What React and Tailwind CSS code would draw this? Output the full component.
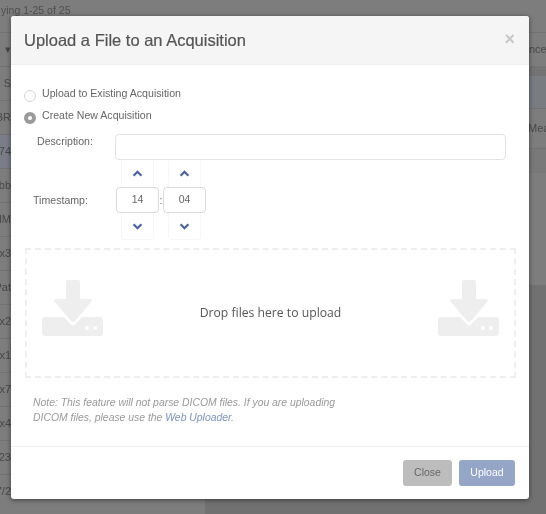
import React from "react";

const sans = "font-['Liberation_Sans',Arial,sans-serif]";

const leftRows = [
  { text: "▾" },
  { text: "S" },
  { text: "BR" },
  { text: "674", selected: true },
  { text: "obb" },
  { text: "MM" },
  { text: "xx3" },
  { text: "Pat" },
  { text: "xx2" },
  { text: "xx1" },
  { text: "xx7" },
  { text: "xx4" },
  { text: "23" },
  { text: "7/2" },
];

const Chevron = ({ up }) => (
  <svg viewBox="0 0 12 8" className="w-[11px] h-[7px]" fill="none">
    <path
      d={up ? "M1.5 6.5 L6 2 L10.5 6.5" : "M1.5 1.5 L6 6 L10.5 1.5"}
      stroke="#4a66a0"
      strokeWidth="2.6"
    />
  </svg>
);

const DownloadIcon = () => (
  <svg viewBox="0 0 61 56" className="w-[61px] h-[56px] -mt-[10px]">
    <path
      d="M24 2 Q24 0 26 0 H36 Q38 0 38 2 V19 H48 Q51 19 49 22 L33 41 Q31 43 29 41 L13 22 Q11 19 14 19 H24 Z"
      fill="#eeeeee"
    />
    <path
      d="M3 37 H22 L29 44.5 Q31 46.5 33 44.5 L40 37 H58 Q61 37 61 40 V53 Q61 56 58 56 H3 Q0 56 0 53 V40 Q0 37 3 37 Z"
      fill="#eeeeee"
    />
    <circle cx="45" cy="48" r="1.9" fill="#ffffff" />
    <circle cx="53" cy="48" r="1.9" fill="#ffffff" />
  </svg>
);

const TimeField = ({ value }) => (
  <div className="flex flex-col items-center w-[43px]">
    <div className="w-[33px] h-[27px] flex items-center justify-center border-x border-[#f7f7f7]">
      <Chevron up />
    </div>
    <div className="w-[43px] h-[26px] flex items-center justify-center rounded-[4px] border border-[#d9d9d9] text-[10.5px] text-[#666]">
      {value}
    </div>
    <div className="w-[33px] h-[27px] flex items-center justify-center border border-t-0 border-[#f7f7f7] rounded-b-[3px]">
      <Chevron />
    </div>
  </div>
);

const App = () => {
  return (
    <div className={`relative w-[546px] h-[514px] overflow-hidden bg-[#717171] blur-[0.3px] ${sans}`}>
      {/* dimmed page behind the modal */}
      <div className="flex">
        <div className="w-[205px] h-[514px] bg-[#7d7d7d]">
          <div className="h-[32px] pt-[3px] pl-[1px] text-[10.5px] leading-[14px] text-[#4f4f4f] whitespace-nowrap">
            ying 1-25 of 25
          </div>
          {leftRows.map((row) => (
            <div
              key={row.text}
              className={`h-[34px] flex items-center border-t border-[#727272] text-[11px] text-[#484848] whitespace-nowrap ${row.selected ? "bg-[#787d88]" : ""}`}
            >
              <span className="w-[11px] flex justify-end">{row.text}</span>
            </div>
          ))}
        </div>
        <div className="w-[341px] h-[285px] bg-[#7d7d7d] flex flex-col text-[11px] text-[#484848] whitespace-nowrap">
          <div className="h-[32px]" />
          <div className="h-[34px] pl-[324px] flex items-center border-t border-[#727272]">nce</div>
          <div className="h-[9px] bg-[#747474]" />
          <div className="h-[33px] border-t border-[#727272] bg-[#797c81]" />
          <div className="h-[40px] pl-[323px] flex items-center border-t border-[#727272] overflow-hidden">
            Meas
          </div>
          <div className="h-[24px] border-t border-[#727272] bg-[#797979]" />
          <div className="flex-1 border-t border-[#767676]" />
        </div>
      </div>

      {/* modal */}
      <div className="absolute left-[11px] top-[16px] w-[518px] h-[483px] flex flex-col bg-white rounded-[3px] shadow-[0_1px_5px_rgba(0,0,0,0.5)]">
        <div className="h-[49px] shrink-0 flex items-center justify-between pl-[13px] pr-[14px] bg-[#f5f5f5] border-b border-[#eeeeee] rounded-t-[3px]">
          <h2 className="text-[16.5px] text-[#555] font-normal leading-none [-webkit-text-stroke:0.2px_#555]">
            Upload a File to an Acquisition
          </h2>
          <span className="text-[18px] font-bold leading-none text-[#c8c8c8] -mt-[3px]">×</span>
        </div>

        <div className="flex-1 flex flex-col px-[13px] text-[10.6px] text-[#666]">
          <div className="flex items-start gap-[6px] mt-[24px] h-[22px]">
            <span className="w-[12px] h-[12px] mt-[1px] rounded-full border border-[#d6d6d6] bg-white" />
            <span className="leading-[12px] -mt-[2px]">Upload to Existing Acquisition</span>
          </div>
          <div className="flex items-start gap-[6px] h-[23px]">
            <span className="w-[12px] h-[12px] mt-[1px] rounded-full bg-[#9a9a9a] flex items-center justify-center">
              <span className="w-[4px] h-[4px] rounded-full bg-white" />
            </span>
            <span className="leading-[12px] -mt-[2px]">Create New Acquisition</span>
          </div>

          <div className="flex items-start">
            <span className="w-[91px] pl-[13px] pt-[1px] leading-[12px]">Description:</span>
            <div className="w-[391px] h-[26px] rounded-[4px] border border-[#e2e2e2]" />
          </div>

          <div className="flex items-center">
            <span className="w-[92px] pl-[9px] leading-[12px]">Timestamp:</span>
            <TimeField value="14" />
            <span className="w-[4px] text-center leading-none">:</span>
            <TimeField value="04" />
          </div>

          <div className="mt-[8px] ml-[1px] w-[491px] h-[130px] px-[15px] flex items-center justify-between border-2 border-dashed border-[#eeeeee]">
            <DownloadIcon />
            <span className="font-['Open_Sans',sans-serif] text-[12.2px] text-[#555]">
              Drop files here to upload
            </span>
            <DownloadIcon />
          </div>

          <p className="mt-[17px] ml-[9px] whitespace-nowrap text-[10.4px] leading-[15px] italic text-[#999]">
            Note: This feature will not parse DICOM files. If you are uploading
            <br />
            DICOM files, please use the <span className="text-[#7d93bf]">Web Uploader</span>.
          </p>
        </div>

        <div className="h-[53px] shrink-0 flex items-center justify-end gap-[7px] pr-[14px] border-t border-[#eeeeee]">
          <button className="w-[49px] h-[26px] rounded-[3px] bg-[#bdbdbd] text-[10.5px] text-[#666]">
            Close
          </button>
          <button className="w-[56px] h-[26px] rounded-[3px] bg-[#94a5c8] text-[10.5px] text-white">
            Upload
          </button>
        </div>
      </div>
    </div>
  );
};

export default App;
